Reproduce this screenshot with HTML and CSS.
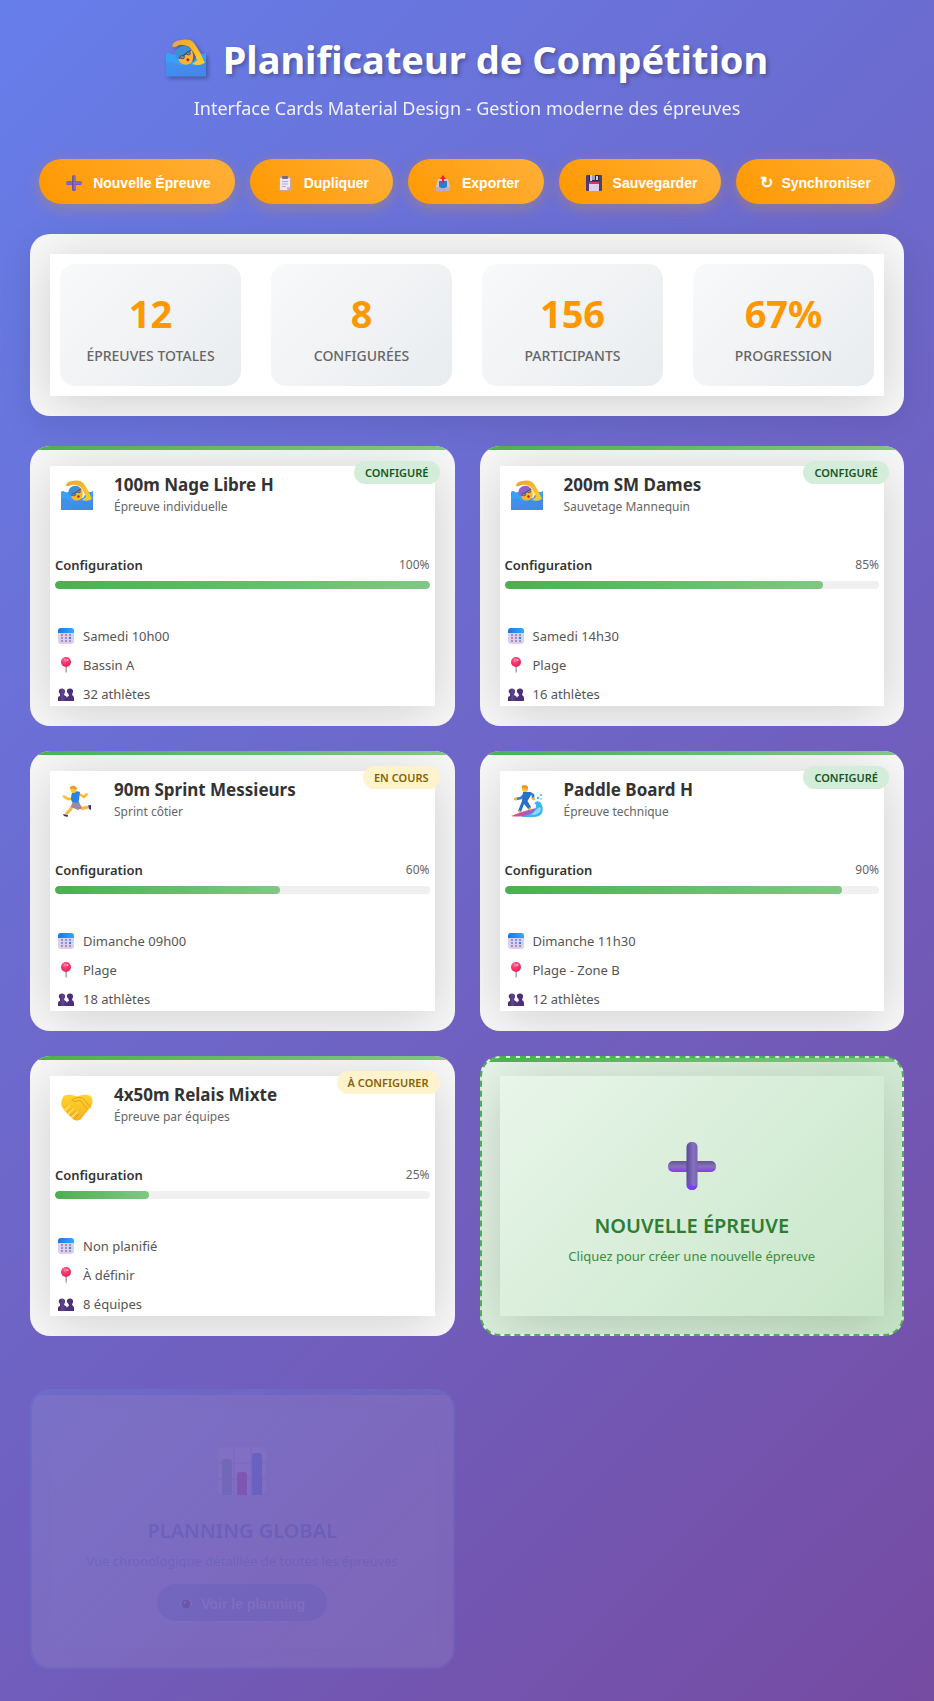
FILE: index.html
```html
<!DOCTYPE html>
<html lang="fr">
<head>
<meta charset="utf-8">
<meta name="viewport" content="width=device-width, initial-scale=1">
<title>Planificateur de Compétition</title>
<link rel="stylesheet" href="styles.css">
</head>
<body>
<svg class="sprite" width="0" height="0" aria-hidden="true">
  <defs>
    <linearGradient id="water" x1="0" y1="0" x2="1" y2="1"><stop offset="0" stop-color="#3f93ee"/><stop offset="1" stop-color="#4585e8"/></linearGradient>
    <linearGradient id="skin" x1="0" y1="0" x2="1" y2="1"><stop offset="0" stop-color="#eda52c"/><stop offset="1" stop-color="#ffd02e"/></linearGradient>
    <linearGradient id="hand" x1="0" y1="0" x2="0" y2="1"><stop offset="0" stop-color="#ffd52c"/><stop offset="1" stop-color="#f9b021"/></linearGradient>
    <linearGradient id="plusv" x1="0" y1="0" x2="1" y2="0"><stop offset="0" stop-color="#5a4593"/><stop offset=".6" stop-color="#8573bd"/><stop offset="1" stop-color="#7b62b8"/></linearGradient>
    <linearGradient id="plush" x1="0" y1="0" x2="0" y2="1"><stop offset="0" stop-color="#66538f"/><stop offset=".5" stop-color="#8573bd"/><stop offset="1" stop-color="#8639f0"/></linearGradient>
    <linearGradient id="purple" x1="0" y1="0" x2="1" y2="0"><stop offset="0" stop-color="#3f2568"/><stop offset=".5" stop-color="#60458c"/><stop offset="1" stop-color="#482a78"/></linearGradient>
    <linearGradient id="cal" x1="0" y1="0" x2="1" y2="0"><stop offset="0" stop-color="#1877ea"/><stop offset="1" stop-color="#38a6ff"/></linearGradient>
    <linearGradient id="board" x1="0" y1="0" x2="1" y2="0"><stop offset="0" stop-color="#ff3d82"/><stop offset="1" stop-color="#8a62e0"/></linearGradient>
    <radialGradient id="ball" cx=".4" cy=".3" r=".8"><stop offset="0" stop-color="#ff8aa6"/><stop offset=".35" stop-color="#fb3b74"/><stop offset="1" stop-color="#d5204f"/></radialGradient>
  </defs>
  <symbol id="i-swim" viewBox="0 0 32 32">
    <path d="M0 12 Q2 10 4 12 Q7 13 9 11 L12 18 H22 L26 11 Q29 13 32 11 V25 H0Z" fill="#38a0f6"/>
    <path d="M10 15 L20 8 Q23 13 21 18 Q18 22 13 20 Q10 18 10 15Z" fill="#fdb52e"/>
    <path d="M8 15 Q6 9 11 6.500 Q17 4 20 9 Q17 13 9.500 16Z"/>
    <path d="M10.500 15.500 L20 9" stroke="#4c4468" stroke-width="1"/>
    <ellipse cx="13" cy="14.500" rx="1.800" ry="1.300" fill="#5f94cc" stroke="#54425c" stroke-width=".7"/>
    <ellipse cx="18" cy="11.500" rx="1.600" ry="1.200" fill="#5f94cc" stroke="#54425c" stroke-width=".7"/>
    <circle cx="17.500" cy="16.500" r="1.200" fill="#b5203a"/>
    <path d="M5 6 Q5 2 11 1 Q20 -1 23 4 Q28 11 31 19 Q27 22 21 20 L25 17 Q22 9 18 6 Q13 4 10 5 Q8 7 5 6Z" fill="url(#skin)"/>
    <path d="M0 19 Q5 17 9 20 Q14 22 19 20 Q25 23 32 19 V30 H0Z" fill="url(#water)"/>
  </symbol>
  <symbol id="i-run" viewBox="0 0 32 32">
    <path d="M13 14 L7 14 L3 11.500" fill="none" stroke="#fdb92c" stroke-width="2.600" stroke-linecap="round" stroke-linejoin="round"/>
    <path d="M18 9 L23 12 L25.500 9.500" fill="none" stroke="#fdb92c" stroke-width="2.600" stroke-linecap="round" stroke-linejoin="round"/>
    <path d="M12 20 L9 25 L5 29" fill="none" stroke="#fdb52c" stroke-width="3" stroke-linejoin="round"/>
    <path d="M17 21 L21 23.500 L27 22" fill="none" stroke="#fdb52c" stroke-width="3" stroke-linejoin="round"/>
    <path d="M2 29 L7 30 L6.500 32 L3 31Z M27 20.500 L30 20 L30 25 L28 24Z" fill="#443075"/>
    <path d="M11.500 17 L18 17 L21 23 L17 25 L10 22Z" fill="#998ca0"/>
    <path d="M11 8 Q15 5 19 7 L17.500 18 L11 17 Q9 13 11 8Z" fill="#2b82e3"/>
    <rect x="9.500" y="1" width="6" height="7" rx="3" fill="#ffc83a"/>
    <path d="M9 2 Q13 -1 16 3 L15 5 Q13 3 9 4Z" fill="#f09a22"/>
  </symbol>
  <symbol id="i-surf" viewBox="0 0 32 32">
    <path d="M16 28 Q26 26 25 21 Q25 18 23 19 Q25 15 29 17 Q33 21 31 28 Q29 32 22 32 H10Z" fill="#39b4ed"/>
    <path d="M25 25 Q29 20 30 24 Q29 30 20 30Z" fill="#8edcf8"/>
    <path d="M0 31 Q12 26 25 23 Q23 29 12 31 Q6 32 0 31Z" fill="url(#board)"/>
    <path d="M12 11 L10 13 L5 14 M19 8 L22 10 L22 13" fill="none" stroke="#3080d5" stroke-width="2.600" stroke-linecap="round"/>
    <path d="M5 14 L4 14 M22 14 L23 14" stroke="#fdb92c" stroke-width="2.400" stroke-linecap="round"/>
    <path d="M12 7 L19 7 L20 10 L16.500 16 L20 22 L18 25 L13 19 L10 27 L7 26 L11 16Z" fill="#2970c9"/>
    <path d="M8 25.500 L9 28 M18 23 L20 25" stroke="#fdb92c" stroke-width="2"/>
    <rect x="11" y="0" width="6" height="7" rx="3" fill="#ffbd32"/>
    <path d="M10.500 1 Q14 -1 17 2 V4 L11 3Z" fill="#e99924"/>
    <circle cx="27" cy="13" r="1.200" fill="#39b4ed"/><circle cx="30" cy="10" r="1" fill="#39b4ed"/><circle cx="30" cy="14" r=".8" fill="#39b4ed"/>
  </symbol>
  <symbol id="i-shake" viewBox="0 0 32 32">
    <path d="M2 7 Q4 4 11 5 L16 6.500 L21 5 Q29 4 31 8 Q33 14 28 19 L20 29 Q16 32 12 29 L3 20 Q-2 14 2 7Z" fill="url(#hand)"/>
    <path d="M11 10 Q15 6 22 8 L30 18 M11 10 Q13 13 19 10 L26 19 M4 19 L7 15 M6 23 L11 18 M9 26 L15 21 M13 29 L18 24" fill="none" stroke="#e0961a" stroke-width=".8" stroke-linecap="round"/>
    <path d="M4 20 L8 16 M8 23 L12 19 M11 27 L16 22" stroke="#ffda50" stroke-width="2.200" stroke-linecap="round"/>
  </symbol>
  <symbol id="i-cal" viewBox="0 0 16 16">
    <rect x="0" y="0" width="16" height="16" rx="3" fill="#dccfee"/>
    <path d="M0 5 V3 Q0 0 3 0 H13 Q16 0 16 3 V5Z" fill="url(#cal)"/>
    <g fill="#a191b8"><rect x="3" y="6" width="2" height="2"/><rect x="7" y="6" width="2" height="2"/><rect x="11" y="6" width="2" height="2"/><rect x="3" y="9" width="2" height="2"/><rect x="7" y="9" width="2" height="2"/><rect x="3" y="12" width="2" height="2"/><rect x="7" y="12" width="2" height="2"/><rect x="11" y="12" width="2" height="2"/></g>
    <rect x="11" y="9" width="2" height="2" fill="#1989f0"/>
  </symbol>
  <symbol id="i-pin" viewBox="0 0 16 16">
    <path d="M7.500 9 H8.800 V15 L8.100 16 L7.500 15Z" fill="#9d91a8"/>
    <circle cx="8" cy="5" r="5" fill="url(#ball)"/><circle cx="9.500" cy="3" r="1" fill="#ffc3d2"/>
  </symbol>
  <symbol id="i-people" viewBox="0 0 16 16">
    <path d="M9 15 V12 Q9 10 11 10 L10.500 8 Q8 6 9 4 Q10 2 12.500 2.500 Q15.500 3 15 6 L14 9 Q16 10 16 12 V15Z" fill="#4d2e7d"/>
    <path d="M0 15 V12 Q0 10 2 10 L2 8 Q0 6 1 4 Q2 2 4.500 2.500 Q7.500 3 7 6 L6 9 Q9 10 9 12 V15Z" fill="url(#purple)"/>
  </symbol>
  <symbol id="i-plus" viewBox="0 0 48 48">
    <rect x="0" y="19" width="48" height="11" rx="5" fill="url(#plush)"/>
    <rect x="18.500" y="0" width="11" height="48" rx="5" fill="url(#plusv)"/>
    <path d="M19 38 V43 Q19 48 24 48 Q29 48 29 43 Q24 47 19 38Z" fill="#7d3df0"/>
  </symbol>
  <symbol id="i-clip" viewBox="0 0 16 16">
    <rect x="2" y="2" width="12" height="14" rx="1" fill="#c6a99f"/><path d="M3 3 H13 V12 L10 15 H3Z" fill="#eee6f7"/>
    <path d="M10 15 V12 H13Z" fill="#c3b4d1"/><rect x="5" y="1" width="6" height="3" rx="1" fill="#776b82"/>
    <path d="M5 6.500 H11 M5 9 H11 M5 11.500 H9" stroke="#b6a9c5"/>
  </symbol>
  <symbol id="i-out" viewBox="0 0 16 16">
    <path d="M3 4 H13 L15 12 V15 H1 V12Z" fill="#cfc5dc"/><path d="M4 6 H12 V12 L10 14 H6 L4 12Z" fill="#237fd4"/>
    <path d="M1 12 H5 L6 13 H10 L11 12 H15 V16 H1Z" fill="#b9adc7"/><path d="M8 0 L11 4 H9 V8 H7 V4 H5Z" fill="#dd244f"/>
  </symbol>
  <symbol id="i-disk" viewBox="0 0 16 16">
    <rect width="16" height="16" rx="1" fill="#4d3d72"/><path d="M3 0 H13 V6 H3Z" fill="#312541"/>
    <path d="M4 0 H6 V6 H4Z M10 1 H12 V5 H10Z" fill="#d5cade"/><rect x="6" width="3" height="5" fill="#a79ab7"/>
    <rect x="3" y="9" width="10" height="7" fill="#dcd1f2"/><rect x="3" y="7" width="10" height="2" fill="#e0365b"/>
  </symbol>
  <symbol id="i-chart" viewBox="0 0 48 48">
    <rect width="48" height="48" rx="6" fill="#fff"/>
    <path d="M0 16 H48 M0 32 H48 M16 0 V48 M33 0 V48" stroke="#c9b8e0"/>
    <path d="M4 48 V15 Q4 12 7 12 H11 Q14 12 14 15 V48Z" fill="#86c09c"/>
    <path d="M19 48 V28 Q19 25 22 25 H26 Q29 25 29 28 V48Z" fill="#f02767"/>
    <path d="M34 48 V9 Q34 6 37 6 H41 Q44 6 44 9 V48Z" fill="#3b8df0"/>
  </symbol>
  <symbol id="i-eye" viewBox="0 0 14 14">
    <path d="M0 7 Q3 2 7 2 Q11 2 14 7 Q11 12 7 12 Q3 12 0 7Z" fill="#eee5f4"/><circle cx="7" cy="7" r="4.500" fill="#473050"/><circle cx="6" cy="5.500" r="1.200" fill="#ccc"/>
  </symbol>
</svg>

<div class="page">
  <header class="header">
    <h1 class="title"><svg class="title-icon cap-blue" aria-hidden="true"><use href="#i-swim"/></svg>Planificateur de Compétition</h1>
    <p class="tagline">Interface Cards Material Design - Gestion moderne des épreuves</p>
  </header>

  <nav class="toolbar" aria-label="Actions">
    <button class="btn" type="button"><span class="btn-icon"><svg aria-hidden="true"><use href="#i-plus"/></svg></span>Nouvelle Épreuve</button>
    <button class="btn" type="button"><span class="btn-icon"><svg aria-hidden="true"><use href="#i-clip"/></svg></span>Dupliquer</button>
    <button class="btn" type="button"><span class="btn-icon"><svg aria-hidden="true"><use href="#i-out"/></svg></span>Exporter</button>
    <button class="btn" type="button"><span class="btn-icon"><svg aria-hidden="true"><use href="#i-disk"/></svg></span>Sauvegarder</button>
    <button class="btn" type="button"><span class="btn-glyph">↻</span>Synchroniser</button>
  </nav>

  <section class="panel stats-panel">
    <div class="surface stats">
      <div class="stat"><div class="stat-value">12</div><div class="stat-label">ÉPREUVES TOTALES</div></div>
      <div class="stat"><div class="stat-value">8</div><div class="stat-label">CONFIGURÉES</div></div>
      <div class="stat"><div class="stat-value">156</div><div class="stat-label">PARTICIPANTS</div></div>
      <div class="stat"><div class="stat-value">67%</div><div class="stat-label">PROGRESSION</div></div>
    </div>
  </section>

  <main class="cards">
    <article class="panel card">
      <span class="badge badge-ok">CONFIGURÉ</span>
      <div class="surface card-body">
        <div class="card-head"><svg class="card-icon cap-blue" aria-hidden="true"><use href="#i-swim"/></svg><div class="card-text"><h2 class="card-title">100m Nage Libre H</h2><p class="card-sub">Épreuve individuelle</p></div></div>
        <div class="progress-head"><span class="progress-name">Configuration</span><span>100%</span></div>
        <div class="track" role="progressbar" aria-label="Configuration" aria-valuenow="100"><div class="fill" style="width:100%"></div></div>
        <ul class="facts"><li><svg aria-hidden="true"><use href="#i-cal"/></svg>Samedi 10h00</li><li><svg aria-hidden="true"><use href="#i-pin"/></svg>Bassin A</li><li><svg aria-hidden="true"><use href="#i-people"/></svg>32 athlètes</li></ul>
      </div>
    </article>
    <article class="panel card">
      <span class="badge badge-ok">CONFIGURÉ</span>
      <div class="surface card-body">
        <div class="card-head"><svg class="card-icon cap-purple" aria-hidden="true"><use href="#i-swim"/></svg><div class="card-text"><h2 class="card-title">200m SM Dames</h2><p class="card-sub">Sauvetage Mannequin</p></div></div>
        <div class="progress-head"><span class="progress-name">Configuration</span><span>85%</span></div>
        <div class="track" role="progressbar" aria-label="Configuration" aria-valuenow="85"><div class="fill" style="width:85%"></div></div>
        <ul class="facts"><li><svg aria-hidden="true"><use href="#i-cal"/></svg>Samedi 14h30</li><li><svg aria-hidden="true"><use href="#i-pin"/></svg>Plage</li><li><svg aria-hidden="true"><use href="#i-people"/></svg>16 athlètes</li></ul>
      </div>
    </article>
    <article class="panel card">
      <span class="badge badge-wait">EN COURS</span>
      <div class="surface card-body">
        <div class="card-head"><svg class="card-icon" aria-hidden="true"><use href="#i-run"/></svg><div class="card-text"><h2 class="card-title">90m Sprint Messieurs</h2><p class="card-sub">Sprint côtier</p></div></div>
        <div class="progress-head"><span class="progress-name">Configuration</span><span>60%</span></div>
        <div class="track" role="progressbar" aria-label="Configuration" aria-valuenow="60"><div class="fill" style="width:60%"></div></div>
        <ul class="facts"><li><svg aria-hidden="true"><use href="#i-cal"/></svg>Dimanche 09h00</li><li><svg aria-hidden="true"><use href="#i-pin"/></svg>Plage</li><li><svg aria-hidden="true"><use href="#i-people"/></svg>18 athlètes</li></ul>
      </div>
    </article>
    <article class="panel card">
      <span class="badge badge-ok">CONFIGURÉ</span>
      <div class="surface card-body">
        <div class="card-head"><svg class="card-icon" aria-hidden="true"><use href="#i-surf"/></svg><div class="card-text"><h2 class="card-title">Paddle Board H</h2><p class="card-sub">Épreuve technique</p></div></div>
        <div class="progress-head"><span class="progress-name">Configuration</span><span>90%</span></div>
        <div class="track" role="progressbar" aria-label="Configuration" aria-valuenow="90"><div class="fill" style="width:90%"></div></div>
        <ul class="facts"><li><svg aria-hidden="true"><use href="#i-cal"/></svg>Dimanche 11h30</li><li><svg aria-hidden="true"><use href="#i-pin"/></svg>Plage - Zone B</li><li><svg aria-hidden="true"><use href="#i-people"/></svg>12 athlètes</li></ul>
      </div>
    </article>
    <article class="panel card">
      <span class="badge badge-wait">À CONFIGURER</span>
      <div class="surface card-body">
        <div class="card-head"><svg class="card-icon" aria-hidden="true"><use href="#i-shake"/></svg><div class="card-text"><h2 class="card-title">4x50m Relais Mixte</h2><p class="card-sub">Épreuve par équipes</p></div></div>
        <div class="progress-head"><span class="progress-name">Configuration</span><span>25%</span></div>
        <div class="track" role="progressbar" aria-label="Configuration" aria-valuenow="25"><div class="fill" style="width:25%"></div></div>
        <ul class="facts"><li><svg aria-hidden="true"><use href="#i-cal"/></svg>Non planifié</li><li><svg aria-hidden="true"><use href="#i-pin"/></svg>À définir</li><li><svg aria-hidden="true"><use href="#i-people"/></svg>8 équipes</li></ul>
      </div>
    </article>
    <button class="panel card card-add" type="button">
      <span class="surface centered">
        <svg class="big-icon" aria-hidden="true"><use href="#i-plus"/></svg>
        <span class="centered-title">NOUVELLE ÉPREUVE</span>
        <span class="centered-text">Cliquez pour créer une nouvelle épreuve</span>
      </span>
    </button>
    <article class="panel card card-plan">
      <div class="surface centered">
        <svg class="big-icon" aria-hidden="true"><use href="#i-chart"/></svg>
        <h2 class="centered-title">PLANNING GLOBAL</h2>
        <p class="centered-text">Vue chronologique détaillée de toutes les épreuves</p>
        <button class="btn btn-plan" type="button"><svg aria-hidden="true"><use href="#i-eye"/></svg>Voir le planning</button>
      </div>
    </article>
  </main>
</div>
</body>
</html>
```
FILE: styles.css
```css
* {
  box-sizing: border-box;
  margin: 0;
  padding: 0;
}

body {
  min-height: 100vh;
  background: linear-gradient(135deg, #667eea 0%, #764ba2 100%);
  font-family: "Noto Sans", sans-serif;
  color: #333;
}

.sprite {
  position: absolute;
}

.cap-blue {
  fill: #3d8fdc;
}

.cap-purple {
  fill: #8d63c9;
}

.page {
  max-width: 1400px;
  margin: 0 auto;
  padding: 30px;
}

.header {
  margin-bottom: 38px;
  text-align: center;
  color: #fff;
}

.title {
  display: flex;
  justify-content: center;
  align-items: center;
  gap: 17px;
  margin-bottom: 7px;
  font-size: 38px;
  line-height: 58px;
  text-shadow: 2px 2px 4px rgba(0, 0, 0, 0.3);
}

.title-icon {
  width: 40px;
  height: 40px;
  filter: drop-shadow(2px 2px 2px rgba(0, 0, 0, 0.3));
}

.tagline {
  font-size: 18px;
  line-height: 26px;
  opacity: 0.9;
}

.toolbar {
  display: flex;
  flex-wrap: wrap;
  justify-content: center;
  gap: 15px;
  margin-bottom: 30px;
}

.btn {
  display: flex;
  align-items: center;
  gap: 8px;
  height: 45px;
  padding: 2px 24px 0;
  border: 0;
  border-radius: 25px;
  background: linear-gradient(45deg, #ff9800, #ffb03a);
  box-shadow: 0 4px 15px rgba(255, 152, 0, 0.3);
  color: #fff;
  font: bold 14px "Liberation Sans", sans-serif;
  cursor: pointer;
}

.btn-icon {
  display: flex;
  justify-content: center;
  width: 22px;
}

.btn-icon svg {
  width: 16px;
  height: 16px;
}

.btn-glyph {
  font-size: 16px;
}

.panel {
  position: relative;
  overflow: hidden;
  padding: 20px;
  border-radius: 20px;
  background: #f8f8f8;
}

.surface {
  background: #fff;
  box-shadow: 0 6px 50px rgba(0, 0, 0, 0.17);
}

.stats-panel {
  margin-bottom: 30px;
  box-shadow: 0 8px 32px rgba(0, 0, 0, 0.1);
}

.stats {
  display: grid;
  grid-template-columns: repeat(4, 1fr);
  gap: 30px;
  padding: 10px;
}

.stat {
  padding: 20px 10px;
  border-radius: 15px;
  background: linear-gradient(135deg, #f8f9fa, #e9ecef);
  text-align: center;
}

.stat-value {
  margin-bottom: 4px;
  color: #ff9800;
  font-size: 38px;
  font-weight: bold;
  line-height: 58px;
}

.stat-label {
  color: #666;
  font-size: 14px;
  font-weight: 500;
  line-height: 20px;
}

.cards {
  display: grid;
  grid-template-columns: repeat(2, 1fr);
  grid-auto-rows: minmax(280px, auto);
  gap: 25px;
}

.card::before {
  content: "";
  position: absolute;
  top: 0;
  left: 0;
  right: 0;
  height: 4px;
  background: linear-gradient(90deg, #4caf50, #81c784);
}

.badge {
  position: absolute;
  top: 15px;
  right: 15px;
  padding: 0 11px;
  border-radius: 12px;
  font-size: 11px;
  font-weight: 600;
  line-height: 23px;
}

.badge-ok {
  background: #d4edda;
  color: #155724;
}

.badge-wait {
  background: #fff3cd;
  color: #856404;
}

.card-body {
  height: 100%;
  padding: 5px 5px 0;
}

.card-head {
  display: flex;
  align-items: center;
  gap: 15px;
  height: 50px;
  margin-bottom: 34px;
}

.card-icon {
  width: 44px;
  height: 32px;
}

.card-text {
  padding-bottom: 2px;
}

.card-title {
  font-size: 17px;
  line-height: 24px;
}

.card-sub {
  color: #666;
  font-size: 12px;
  line-height: 20px;
}

.progress-head {
  display: flex;
  justify-content: space-between;
  margin-bottom: 6px;
  color: #666;
  font-size: 12px;
  line-height: 20px;
}

.progress-name {
  color: #333;
  font-size: 13px;
  font-weight: 600;
}

.track {
  overflow: hidden;
  height: 8px;
  margin-bottom: 36px;
  border-radius: 4px;
  background: #f0f0f0;
}

.fill {
  height: 100%;
  border-radius: 4px;
  background: linear-gradient(90deg, #4caf50, #81c784);
}

.facts {
  display: grid;
  gap: 7px;
  list-style: none;
}

.facts li {
  display: flex;
  align-items: center;
  gap: 9px;
  padding-left: 3px;
  color: #555;
  font-size: 13px;
  line-height: 22px;
}

.facts svg {
  width: 16px;
  height: 16px;
}

.card-add {
  padding: 18px;
  border: 2px dashed #4caf50;
  background: linear-gradient(135deg, #e8f5e9, #c8e6c9);
  font-family: inherit;
  cursor: pointer;
}

.card-add .surface {
  padding-top: 17px;
  background: linear-gradient(135deg, #e8f5e9, #c8e6c9);
}

.centered {
  display: flex;
  flex-direction: column;
  align-items: center;
  justify-content: center;
  height: 100%;
}

.big-icon {
  width: 48px;
  height: 48px;
  margin-bottom: 21px;
}

.centered-title {
  margin-bottom: 4px;
  color: #2e7d32;
  font-size: 20px;
  font-weight: 600;
  line-height: 30px;
}

.centered-text {
  color: #388e3c;
  font-size: 13px;
  line-height: 22px;
}

.card-plan {
  height: 280px;
  margin-top: 28px;
  padding: 18px;
  border: 2px solid #64b5f6;
  background: #d9e6f2;
  opacity: 0.11;
}

.card-plan::before {
  background: #64b5f6;
}

.card-plan .surface {
  padding-top: 10px;
  background: #d9e6f2;
  box-shadow: 0 6px 50px rgba(0, 0, 0, 0.08);
}

.card-plan .centered-title {
  color: #3a86cf;
}

.card-plan .centered-text {
  color: #5aa2e0;
}

.btn-plan {
  height: 37px;
  margin-top: 12px;
  padding: 2px 22px 0;
  background: #7db8ea;
  box-shadow: none;
}

.btn-plan svg {
  width: 14px;
  height: 14px;
}
```
